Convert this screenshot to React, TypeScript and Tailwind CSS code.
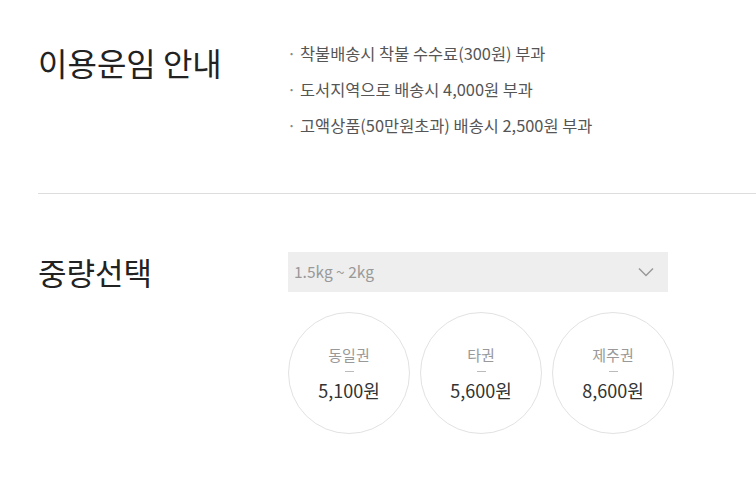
const font = { fontFamily: '"Noto Sans CJK KR", "Noto Sans", sans-serif' };

const fees = [
  '착불배송시 착불 수수료(300원) 부과',
  '도서지역으로 배송시 4,000원 부과',
  '고액상품(50만원초과) 배송시 2,500원 부과',
];

const zones = [
  { name: '동일권', price: '5,100원' },
  { name: '타권', price: '5,600원' },
  { name: '제주권', price: '8,600원' },
];

function ZoneCircle({ name, price }: { name: string; price: string }) {
  return (
    <div className="flex h-[122px] w-[122px] flex-col items-center justify-center rounded-full border border-[#e2e2e2]">
      <span className="text-[15px] leading-[20px] text-[#999]">{name}</span>
      <span className="mt-[6px] h-px w-[9px] bg-[#bbb]" />
      <span className="mt-[7px] text-[18px] leading-[23px] text-[#333]">{price}</span>
    </div>
  );
}

export default function App() {
  return (
    <div className="h-[488px] w-[756px] overflow-hidden bg-white" style={font}>
      <section className="flex pl-[38px] pt-[38px] pb-[55px]">
        <h2 className="w-[249px] text-[32px] leading-[48px] font-normal text-[#222]">이용운임 안내</h2>
        <ul className="flex flex-col gap-[11px] pt-[3px]">
          {fees.map((t) => (
            <li key={t} className="flex items-center text-[16.4px] leading-[25px] text-[#555]">
              <span className="w-[13px] text-[#888]">·</span>
              {t}
            </li>
          ))}
        </ul>
      </section>

      <div className="ml-[38px] h-px bg-[#dddddd]" />

      <section className="flex pl-[38px] pt-[58px]">
        <h2 className="w-[250px] text-[31px] leading-[40px] font-normal text-[#222]">중량선택</h2>
        <div className="flex flex-col">
          <div className="flex h-[40px] w-[380px] items-center justify-between bg-[#eeeeee] pl-[6px] pr-[14px]">
            <span className="text-[15.5px] text-[#999]">1.5kg ~ 2kg</span>
            <svg width="16" height="10" viewBox="0 0 16 10" fill="none">
              <path d="M1 1.5 L8 8.5 L15 1.5" stroke="#999" strokeWidth="1.5" />
            </svg>
          </div>
          <div className="mt-[20px] flex gap-[10px]">
            {zones.map((z) => (
              <ZoneCircle key={z.name} name={z.name} price={z.price} />
            ))}
          </div>
        </div>
      </section>
    </div>
  );
}
